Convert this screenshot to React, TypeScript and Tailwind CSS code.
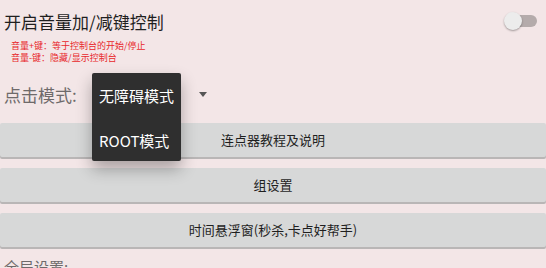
import React from "react";

const font = { fontFamily: '"Noto Sans CJK SC", "Noto Sans", sans-serif' };

const buttons = ["连点器教程及说明", "组设置", "时间悬浮窗(秒杀,卡点好帮手)"];

export default function App() {
  return (
    <div
      className="relative h-[268px] w-[546px] overflow-hidden bg-[#f3e6e7]"
      style={font}
    >
      {/* Volume key toggle */}
      <div className="flex h-[40px] items-center justify-between pl-[4px] pr-[9px] pt-[2px]">
        <span className="text-[17px] leading-none text-[#1f1f1f]">
          开启音量加/减键控制
        </span>
        <div className="relative h-[12px] w-[28px] rounded-full bg-[#b4abab]">
          <div className="absolute left-[-5px] top-[-3px] h-[18px] w-[18px] rounded-full bg-[#ececec] shadow-[0_1px_2px_rgba(0,0,0,0.35)]" />
        </div>
      </div>
      <div className="pl-[11px] text-[9px] leading-[12px] text-[#e8282b]">
        <div>音量+键：等于控制台的开始/停止</div>
        <div>音量-键：隐藏/显示控制台</div>
      </div>

      {/* Click mode */}
      <div className="mt-[15px] flex h-[30px] items-center pl-[4px]">
        <span className="w-[195px] text-[17px] leading-none text-[#6e6a6a]">
          点击模式:
        </span>
        <div className="h-0 w-0 border-x-[4px] border-t-[5px] border-x-transparent border-t-[#555]" />
      </div>

      {/* Buttons */}
      <div className="mt-[14px] flex flex-col gap-[11px]">
        {buttons.map((b) => (
          <div
            key={b}
            className="flex h-[34px] items-center justify-center rounded-[2px] bg-[#d7d8d8] text-[13px] text-[#1f1f1f] shadow-[0_2px_0_#b9b6b6]"
          >
            {b}
          </div>
        ))}
      </div>
      <div className="mt-[12px] pl-[4px] text-[15px] leading-none text-[#6e6a6a]">
        全局设置:
      </div>

      {/* Dropdown menu */}
      <div className="absolute left-[92px] top-[73px] flex h-[88px] w-[89px] flex-col rounded-[2px] bg-[#2f2f2f] text-[15px] leading-none text-white shadow-[0_8px_16px_rgba(0,0,0,0.3)]">
        <div className="flex h-[45px] items-center pl-[7px]">无障碍模式</div>
        <div className="flex h-[43px] items-center pl-[7px] pt-[2px]">ROOT模式</div>
      </div>
    </div>
  );
}
